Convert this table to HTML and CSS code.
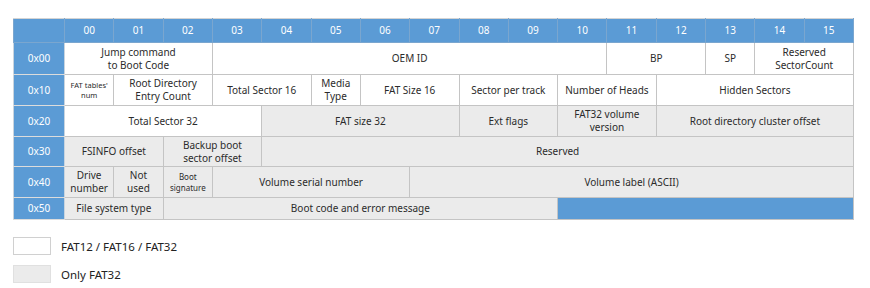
FILE: index.html
```html
<!DOCTYPE html>
<html>
<head>
<meta charset="utf-8">
<link rel="stylesheet" href="styles.css">
</head>
<body>
<div class="page">
<table class="fat">
  <colgroup>
    <col class="c-lab">
    <col span="16" class="c-b">
  </colgroup>
  <tr class="hdr">
    <th></th><th>00</th><th>01</th><th>02</th><th>03</th><th>04</th><th>05</th><th>06</th><th>07</th><th>08</th><th>09</th><th>10</th><th>11</th><th>12</th><th>13</th><th>14</th><th>15</th>
  </tr>
  <tr class="r0">
    <th>0x00</th>
    <td colspan="3">Jump command<br>to Boot Code</td>
    <td colspan="8">OEM ID</td>
    <td colspan="2">BP</td>
    <td>SP</td>
    <td colspan="2">Reserved<br>SectorCount</td>
  </tr>
  <tr class="r1">
    <th>0x10</th>
    <td class="tiny">FAT tables'<br>num</td>
    <td colspan="2">Root Directory<br>Entry Count</td>
    <td colspan="2">Total Sector 16</td>
    <td>Media<br>Type</td>
    <td colspan="2">FAT Size 16</td>
    <td colspan="2">Sector per track</td>
    <td colspan="2">Number of Heads</td>
    <td colspan="4">Hidden Sectors</td>
  </tr>
  <tr class="r2">
    <th>0x20</th>
    <td colspan="4">Total Sector 32</td>
    <td colspan="4" class="g">FAT size 32</td>
    <td colspan="2" class="g">Ext flags</td>
    <td colspan="2" class="g">FAT32 volume<br>version</td>
    <td colspan="4" class="g">Root directory cluster offset</td>
  </tr>
  <tr class="r3">
    <th>0x30</th>
    <td colspan="2" class="g">FSINFO offset</td>
    <td colspan="2" class="g">Backup boot<br>sector offset</td>
    <td colspan="12" class="g">Reserved</td>
  </tr>
  <tr class="r4">
    <th>0x40</th>
    <td class="g">Drive<br>number</td>
    <td class="g">Not<br>used</td>
    <td class="g tiny2">Boot<br>signature</td>
    <td colspan="4" class="g">Volume serial number</td>
    <td colspan="9" class="g">Volume label (ASCII)</td>
  </tr>
  <tr class="r5">
    <th>0x50</th>
    <td colspan="2" class="g">File system type</td>
    <td colspan="8" class="g">Boot code and error message</td>
    <td colspan="6" class="blue"></td>
  </tr>
</table>
<div class="legend">
  <div class="item"><span class="swatch"></span><span>FAT12 / FAT16 / FAT32</span></div>
  <div class="item"><span class="swatch gray"></span><span>Only FAT32</span></div>
</div>
</div>
</body>
</html>
```
FILE: styles.css
```css
html, body {
  margin: 0;
  padding: 0;
  background: #fff;
}
.page {
  padding: 18px 0 0 13px;
  font-family: "Noto Sans", "Open Sans", sans-serif;
  color: #2b2b2b;
}
.fat {
  border-collapse: collapse;
  table-layout: fixed;
  width: 841px;
  border: 1px solid #d4d4d4;
}
.c-lab { width: 51px; }
.fat th, .fat td {
  padding: 0;
  text-align: center;
  vertical-align: middle;
  font-size: 10px;
  line-height: 13px;
  border: 1px solid #c4c4c4;
  font-weight: normal;
}
.fat th {
  background: #5b9bd5;
  color: #fff;
  border-color: #c8d4df;
  border-bottom-color: #dcdcdc;
}
.hdr th { border-color: #7aa6cf; border-top-color: #d4d4d4; }
.hdr th:first-child { border-right-color: #7aa6cf; }
.hdr { height: 24px; }
.r0 { height: 32px; }
.r1 { height: 31px; }
.r2 { height: 31px; }
.r3 { height: 30px; }
.r4 { height: 31px; }
.r5 { height: 22px; }
.fat td.g { background: #ebebeb; }
.fat td.blue { background: #5b9bd5; }
.fat td.tiny { font-size: 7.5px; line-height: 10px; }
.fat td.tiny2 { font-size: 8px; line-height: 11px; }
.legend {
  margin-top: 17px;
  display: flex;
  flex-direction: column;
  gap: 10px;
}
.item {
  display: flex;
  align-items: center;
  gap: 10px;
  font-size: 11.5px;
  color: #222;
}
.swatch {
  width: 36px;
  height: 16px;
  border: 1px solid #d0d0d0;
  background: #fff;
}
.swatch.gray {
  background: #ebebeb;
  border-color: #e0e0e0;
}
```
